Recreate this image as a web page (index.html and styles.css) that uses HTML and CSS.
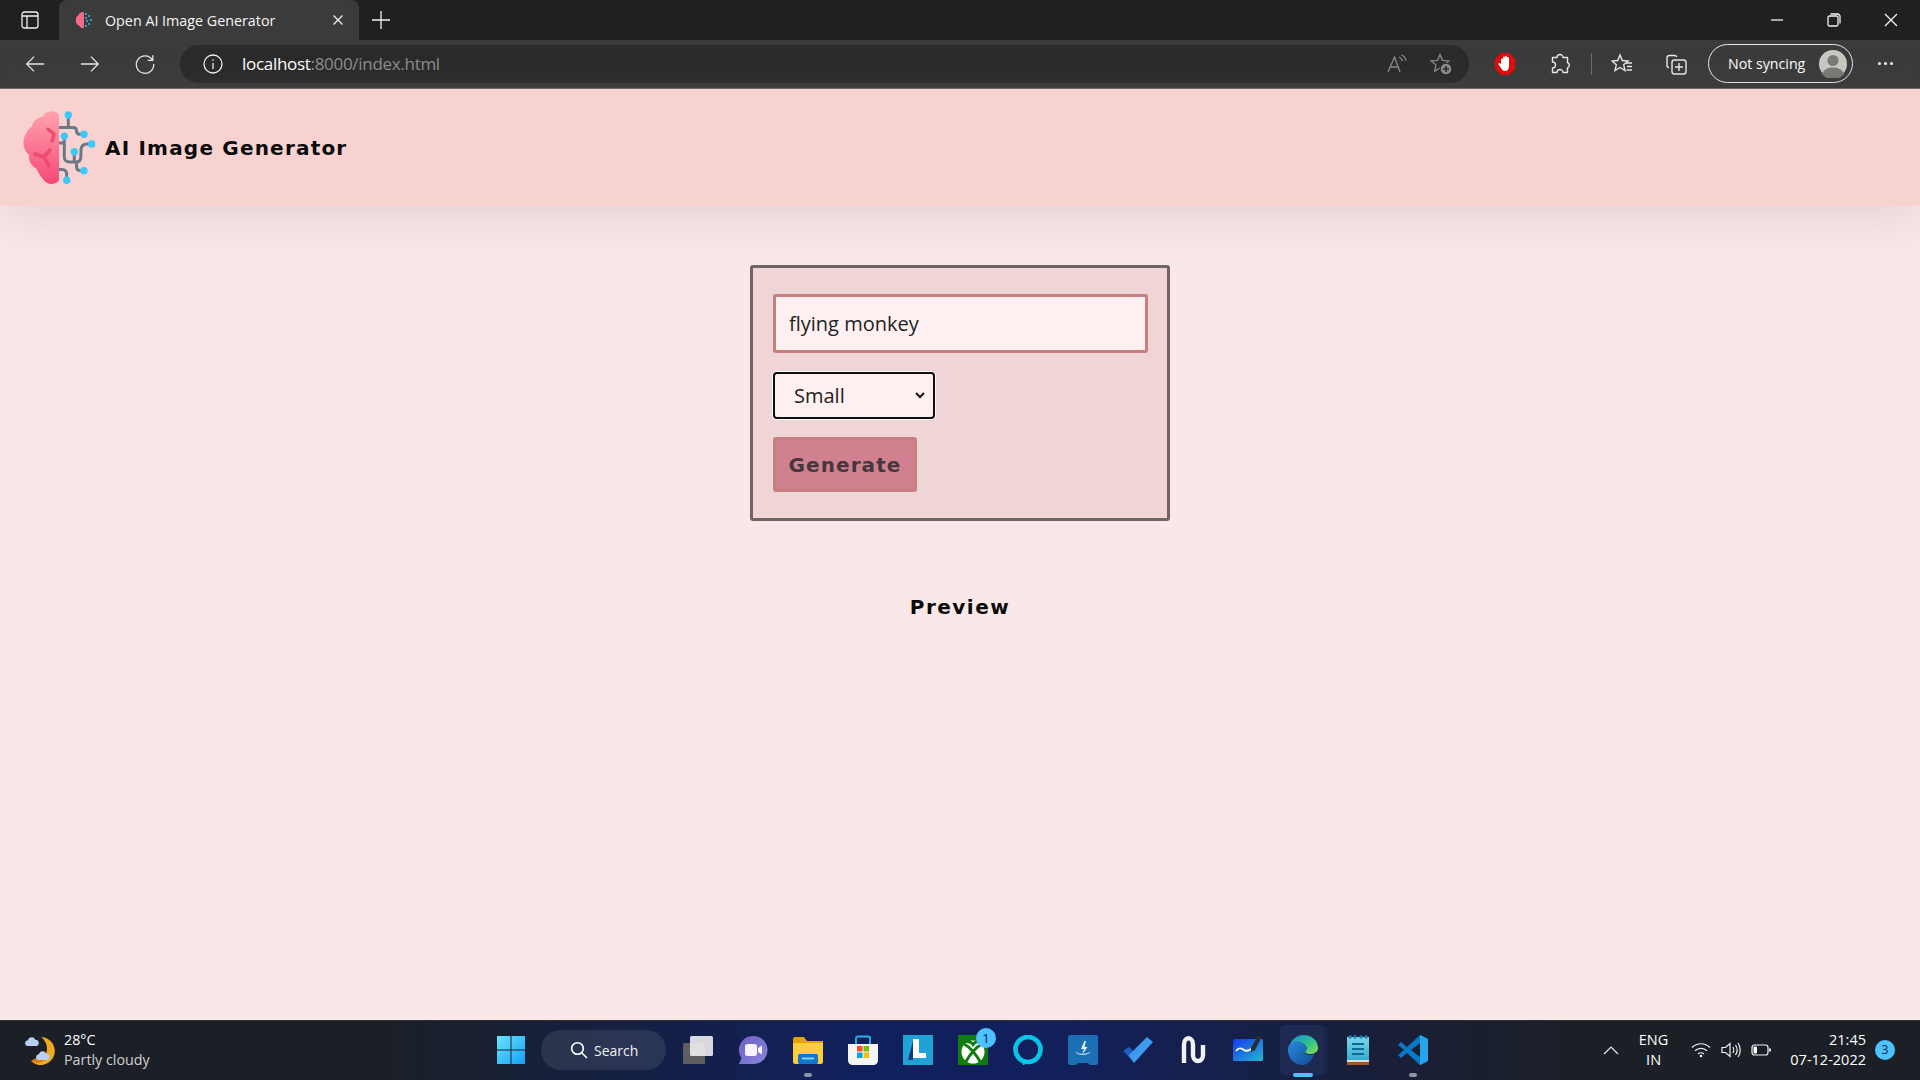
FILE: index.html
```html
<!DOCTYPE html>
<html lang="en">
<head>
    <meta charset="UTF-8">
    <title>Open AI Image Generator</title>
    <link rel="stylesheet" href="styles.css">
</head>
<body>

<div class="tabstrip">
    <svg class="tab-toggle" viewBox="0 0 18 18"><rect x="1" y="1" width="16" height="16" rx="2.5"/><path d="M1 5h16M6 5v12"/></svg>
    <div class="tab">
        <svg class="favicon" viewBox="0 0 18 18">
            <path d="M9 1C6 1 4 2 3.500 4 1.500 5 .5 7 1 9.500c-.5 2.500 1 4.500 3 5 1 2 3 3 5 2.500z" fill="#f4688a"/>
            <g fill="#35bfe6"><circle cx="11" cy="3" r="1"/><circle cx="14" cy="5" r="1"/><circle cx="11" cy="7" r="1"/><circle cx="16" cy="9" r="1"/><circle cx="12" cy="10" r="1"/><circle cx="14" cy="13" r="1"/><circle cx="11" cy="15" r="1"/></g>
        </svg>
        <span class="tab-title">Open AI Image Generator</span>
        <svg class="tab-close" viewBox="0 0 12 12"><path d="M1.500 1.500l9 9M10.500 1.500l-9 9"/></svg>
    </div>
    <svg class="new-tab" viewBox="0 0 18 18"><path d="M9 0v18M0 9h18"/></svg>
    <div class="window-controls">
        <svg viewBox="0 0 14 14"><path d="M1 7h12"/></svg>
        <svg viewBox="0 0 14 14"><rect x="1" y="3" width="10" height="10" rx="1.500"/><path d="M3.500 1h7a2.500 2.500 0 0 1 2.500 2.500v7"/></svg>
        <svg viewBox="0 0 14 14"><path d="M1 1l12 12M13 1L1 13"/></svg>
    </div>
</div>

<div class="toolbar">
    <svg class="tool-icon nav-back" viewBox="0 0 24 24"><path d="M22 12H3M11 4l-8 8 8 8"/></svg>
    <svg class="tool-icon nav-forward" viewBox="0 0 24 24"><path d="M2 12h19M13 4l8 8-8 8"/></svg>
    <svg class="tool-icon nav-reload" viewBox="0 0 24 24"><path d="M20 7.500A9.500 9.500 0 1 0 21.500 12M20.500 2.500V8h-5.500"/></svg>
    <div class="omnibox">
        <svg class="info-icon" viewBox="0 0 20 20"><circle cx="10" cy="10" r="9"/><path d="M10 9v6M10 5.200v1.600"/></svg>
        <span class="url"><span class="url-host">localhost</span>:8000/index.html</span>
        <svg class="dim-icon read-aloud" viewBox="0 0 20 20"><path d="M1 18L7.500 3 13 18M3.500 13h7.500M12 3c2 .8 3 2 3.500 4M14.500 1c2.500 1 4 3 4.500 5.500"/></svg>
        <svg class="dim-icon fav-add" viewBox="0 0 22 22">
            <path d="M10 1.500l2.500 5.800 6.300.6-4.800 4.200 1.400 6.200L10 15l-5.400 3.300L6 12.100 1.200 7.900l6.300-.6z"/>
            <circle class="fav-add-dot" cx="16" cy="16" r="5.800"/>
            <path class="fav-add-plus" d="M16 13v6M13 16h6"/>
        </svg>
    </div>
    <svg class="adblock" viewBox="0 0 20 22">
        <path d="M6 0h8l6 6v10l-6 6H6l-6-6V6z" fill="#e30b0b"/>
        <path d="M6 11V6.500a1 1 0 0 1 2 0V4.500a1 1 0 0 1 2 0v-.5a1 1 0 0 1 2 0v1a1 1 0 0 1 2 0v8c0 3-1.500 5-4 5-2 0-3-1-4-3l-2.500-3.500c-.5-1 .8-2 1.700-1z" fill="#fff"/>
    </svg>
    <svg class="tool-icon extensions" viewBox="0 0 22 22"><path d="M8 4.500a3 3 0 0 1 6 0h4.500v5a3 3 0 0 1 0 5.500v4.500H14a3 3 0 0 0-6 0H3.500V15a3 3 0 0 0 0-6V4.500z" stroke-linejoin="round"/></svg>
    <span class="toolbar-divider"></span>
    <svg class="tool-icon favorites" viewBox="0 0 22 22"><path d="M9 2l2.300 5.500 5.700.5-4.300 3.800 1.300 5.700-5-3-5 3 1.300-5.700L1 8l5.700-.5zM15 10h6M16 13.500h5M15.500 17h5.500"/></svg>
    <svg class="tool-icon collections" viewBox="0 0 22 22"><path d="M4 14.500c-1 0-2-.7-2-2V5c0-1.500 1-2.500 2.500-2.500h5c1.200 0 2 .7 2.300 1.500"/><rect x="7" y="7" width="14" height="14" rx="2.500"/><path d="M14 10v8M10 14h8"/></svg>
    <div class="sync-pill">
        <span class="sync-label">Not syncing</span>
        <svg class="avatar" viewBox="0 0 28 28">
            <circle cx="14" cy="14" r="14" fill="#c9c8c3"/>
            <circle cx="14" cy="10.500" r="5.500" fill="#7b7a76"/>
            <path d="M3 24c2-5 6-6.500 11-6.500S23 19 25 24a14 14 0 0 1-22 0z" fill="#7b7a76"/>
        </svg>
    </div>
    <span class="more-dots"><i></i><i></i><i></i></span>
</div>

<header class="site-header">
    <svg class="logo" viewBox="0 0 80 80">
        <defs>
            <linearGradient id="brainFill" x1="0" y1="0" x2="0" y2="1">
                <stop offset="0" stop-color="#ffa3ad"/>
                <stop offset="1" stop-color="#f5487a"/>
            </linearGradient>
        </defs>
        <path d="M39 7C37 4 33 2.500 29 3.500c-3 .5-5 2.500-6 5C17 9.500 13 13 12 18.500 7 22 3 29 3.500 36c.5 5 2.500 8.500 5.500 11-.5 6 2 11 7.500 13.500C19 67 23 72 27 75c5 2 9 .5 12-2.500z" fill="url(#brainFill)"/>
        <path d="M28 21l6 5-2 7" fill="none" stroke="#ec4d70" stroke-width="3.500" stroke-linecap="round" stroke-linejoin="round"/>
        <path d="M15 46l9 3 6-7M24 49l5 9" fill="none" stroke="#ec4d70" stroke-width="3.500" stroke-linecap="round" stroke-linejoin="round"/>
        <g fill="none" stroke="#6b7985" stroke-width="3">
            <path d="M39 19.500h14c2.500 0 3.500 1.500 3.500 3.500s1.500 3.300 3.500 3.300h4"/>
            <path d="M48.300 7v12.500"/>
            <path d="M39 35h5.300"/>
            <path d="M44.300 28.300V49c0 3 2 5 5 5h7c2.500 0 4-1.500 4.500-4l.2-8c.3-4 2.500-6 6-6h4.700"/>
            <path d="M54.300 43.700V54"/>
            <path d="M56.500 54v4.500c0 2.700 1.500 4.200 4 4.200H64"/>
            <path d="M39 61.500h3c3 0 4.700 2 4.700 5v5.800"/>
        </g>
        <g fill="#3dc8f5">
            <circle cx="48.300" cy="7" r="3.700"/>
            <circle cx="64" cy="26.300" r="3.700"/>
            <circle cx="44.300" cy="28.300" r="3.700"/>
            <circle cx="71.700" cy="36" r="3.700"/>
            <circle cx="54.300" cy="43.700" r="3.700"/>
            <circle cx="64" cy="62.700" r="3.700"/>
            <circle cx="46.700" cy="72.300" r="3.700"/>
        </g>
    </svg>
    <h1 class="site-title">AI Image Generator</h1>
</header>

<main class="content">
    <form class="prompt-form">
        <input class="prompt-input" type="text" value="flying monkey">
        <select class="size-select">
            <option>Small</option>
            <option>Medium</option>
            <option>Large</option>
        </select>
        <button class="generate-btn" type="button">Generate</button>
    </form>
    <h2 class="preview-title">Preview</h2>
</main>

<footer class="taskbar">
    <div class="weather">
        <svg class="weather-icon" viewBox="0 0 32 32">
            <path d="M18 3A14 14 0 1 1 8 27c8 1 15-3 16-11 .5-5-2-10-6-13z" fill="#eeaa1f"/>
            <path d="M8 27c5 3 12 2 16-3l-6-3z" fill="#d97a14"/>
            <path d="M4 12a3 3 0 0 1 .8-5.800 4 4 0 0 1 7.500-.5 3.200 3.200 0 0 1 1 6.300z" fill="#b9d0f2"/>
            <path d="M15 26a3 3 0 0 1 .8-5.800 4 4 0 0 1 7.500-.5 3.200 3.200 0 0 1 1 6.300z" fill="#b9d0f2"/>
        </svg>
        <div class="weather-text">
            <span class="weather-temp">28°C</span>
            <span class="weather-desc">Partly cloudy</span>
        </div>
    </div>

    <div class="task-icons">
        <div class="task-item start">
            <svg viewBox="0 0 30 30">
                <defs><linearGradient id="winFill" x1="0" y1="0" x2="1" y2="1"><stop offset="0" stop-color="#6fe3ff"/><stop offset="1" stop-color="#12a0f5"/></linearGradient></defs>
                <path d="M1 1h13.500v13.500H1zM15.500 1H29v13.500H15.500zM1 15.500h13.500V29H1zM15.500 15.500H29V29H15.500z" fill="url(#winFill)"/>
            </svg>
        </div>
        <div class="search-pill">
            <svg viewBox="0 0 18 18"><circle cx="7.500" cy="7.500" r="5.800"/><path d="M11.700 11.700L17 17"/></svg>
            <span>Search</span>
        </div>
        <div class="task-item">
            <svg viewBox="0 0 30 30">
                <rect x="0" y="8" width="22" height="21" rx="1.500" fill="#5f5f5f"/>
                <rect x="7" y="1" width="23" height="20" rx="1.500" fill="#f2f2f2" opacity=".88"/>
            </svg>
        </div>
        <div class="task-item">
            <svg viewBox="0 0 30 30">
                <defs><linearGradient id="chatFill" x1="0" y1="0" x2="1" y2="1"><stop offset="0" stop-color="#6a5fc0"/><stop offset="1" stop-color="#8a86e0"/></linearGradient></defs>
                <path d="M15.500 1a14 14 0 0 1 0 28H1l2.500-6A14 14 0 0 1 15.500 1z" fill="url(#chatFill)"/>
                <rect x="7" y="9" width="12" height="12" rx="2.500" fill="#f6f4ff"/>
                <path d="M20 13l4-2.500v9L20 17z" fill="#f6f4ff"/>
            </svg>
        </div>
        <div class="task-item has-dot">
            <svg viewBox="0 0 30 30"><path d="M0 4c0-1 1-2 2-2h9l3 4h16v3H0z" fill="#e2a209"/><path d="M0 8h30v19c0 1-1 2-2 2H2c-1 0-2-1-2-2z" fill="#fdcd3f"/><rect x="5" y="19" width="20" height="10" rx="1.500" fill="#1277c9"/><rect x="9" y="22.500" width="12" height="2" fill="#7fd0f5"/></svg>
        </div>
        <div class="task-item">
            <svg viewBox="0 0 30 30"><path d="M0 9h30v16c0 3-2 5-5 5H5c-3 0-5-2-5-5z" fill="#f5f5f5"/><path d="M8 9V3c0-1 1-1.500 2-1.500h10c1 0 2 .5 2 1.500v6" fill="none" stroke="#2ab4e5" stroke-width="1.800"/><rect x="9" y="11" width="5.500" height="5.500" fill="#f25022"/><rect x="15.500" y="11" width="5.500" height="5.500" fill="#7fba00"/><rect x="9" y="17.500" width="5.500" height="5.500" fill="#00a4ef"/><rect x="15.500" y="17.500" width="5.500" height="5.500" fill="#ffb900"/></svg>
        </div>
        <div class="task-item">
            <svg viewBox="0 0 30 30"><rect width="30" height="30" fill="#1fa3d6"/><path d="M5 25L10 6v19z" fill="#123a7a"/><path d="M10 4h6v14h7v5H10z" fill="#fff"/></svg>
        </div>
        <div class="task-item has-badge">
            <svg viewBox="0 0 30 30">
                <rect width="30" height="30" rx="1" fill="#107c10"/>
                <circle cx="15" cy="17" r="11.500" fill="#fff"/>
                <path d="M6 9c6 3 13 12 17 19M24 9c-6 3-13 12-17 19M8 6.500c4 0 6 1.500 7 3 1-1.500 3-3 7-3" fill="none" stroke="#107c10" stroke-width="3"/>
            </svg>
            <span class="task-badge">1</span>
        </div>
        <div class="task-item">
            <svg viewBox="0 0 30 30">
                <circle cx="15" cy="14.500" r="12.500" fill="none" stroke="#0ac4e8" stroke-width="4.600"/>
                <path d="M8.500 24l1.500 6.500 6-3.500z" fill="#0ac4e8"/>
            </svg>
        </div>
        <div class="task-item">
            <svg viewBox="0 0 30 30">
                <path d="M2 0h26c1 0 2 1 2 2v26c0 1-1 2-2 2h-6l-2-2H10l-2 2H2c-1 0-2-1-2-2V2C0 1 1 0 2 0z" fill="#1a6fb5"/>
                <path d="M16.500 6l-3.500 8h3l-2 6 5.500-8h-3l1.500-6z" fill="#e6f2fb"/>
                <path d="M8 16c-1 2 3 4 7 4s8-2 7-4c0 1.500-3 2.700-7 2.700S8 17.500 8 16z" fill="#b5d8f0"/>
            </svg>
        </div>
        <div class="task-item">
            <svg viewBox="0 0 30 30"><path d="M10 26L0 16l6-4 6 6z" fill="#1b5fc1"/><path d="M5.500 20.500L11 28 30 7l-6-5z" fill="#3d9bef"/></svg>
        </div>
        <div class="task-item">
            <svg viewBox="0 0 30 30"><path d="M6 28V10c0-9 9-9 9 0v10c0 8 10 8 10 0V10" fill="none" stroke="#f2f2f2" stroke-width="4.400"/></svg>
        </div>
        <div class="task-item">
            <svg viewBox="0 0 30 30">
                <defs><linearGradient id="boardFill" x1="0" y1="0" x2="1" y2="1"><stop offset="0" stop-color="#1438f0"/><stop offset="1" stop-color="#25b8d0"/></linearGradient></defs>
                <rect y="4" width="30" height="22" rx="1.500" fill="url(#boardFill)"/>
                <path d="M3 16c3-4 5-3 7-1.500s4 2.500 8-.5" fill="none" stroke="#fff" stroke-width="1.800"/>
                <path d="M18 13L25 0l3.500 2L22 15l-4 2z" fill="#2a2d34"/>
            </svg>
        </div>
        <div class="task-item is-active">
            <svg viewBox="0 0 30 30">
                <defs>
                    <linearGradient id="edgeFill" x1="0" y1="0" x2="1" y2="1"><stop offset="0" stop-color="#1c8fd8"/><stop offset=".55" stop-color="#2fc28c"/><stop offset="1" stop-color="#8ae050"/></linearGradient>
                    <linearGradient id="edgeBlue" x1="0" y1="0" x2="1" y2="1"><stop offset="0" stop-color="#2a8be0"/><stop offset="1" stop-color="#124a90"/></linearGradient>
                </defs>
                <path d="M0 15C0 7 8 4 14 8c5 3 6 7 3 9-1 1 0 3 5 3 2 0 4-.5 4.500-1.500C24 25 20 30 15 30 6 30 0 23 0 15z" fill="url(#edgeBlue)"/>
                <path d="M2 9C5 3 10 0 16 0c8 0 14 6 14 13 0 4-4 6-8 6-4 0-5-1-4.500-2.500C20 14 19 11 15 8.500 10 5.500 5 6 2 9z" fill="url(#edgeFill)"/>
            </svg>
        </div>
        <div class="task-item">
            <svg viewBox="0 0 30 30">
                <defs><linearGradient id="padFill" x1="0" y1="0" x2="0" y2="1"><stop offset="0" stop-color="#7fd6ea"/><stop offset="1" stop-color="#2fa8cc"/></linearGradient></defs>
                <rect x="4" y="2" width="22" height="25" fill="url(#padFill)"/>
                <rect x="4" y="26" width="22" height="4" fill="#a5591c"/>
                <path d="M4 26h22" stroke="#fff" stroke-width="1.500"/>
                <path d="M9 9h12M9 14h12M9 19h12" stroke="#106a94" stroke-width="2"/>
                <g fill="#1585aa"><circle cx="7" cy="2" r="1.800"/><circle cx="12" cy="2" r="1.800"/><circle cx="18" cy="2" r="1.800"/><circle cx="23" cy="2" r="1.800"/></g>
            </svg>
        </div>
        <div class="task-item has-dot">
            <svg viewBox="0 0 30 30">
                <path fill-rule="evenodd" d="M22 0l8 4v22l-8 4L9 18l-6 5-3-3 6-5-6-5 3-3 6 5zM22 8l-9 7 9 7z" fill="#0a78c8"/>
                <path fill-rule="evenodd" d="M22 0l8 4v22l-8 4v-8V8z" fill="#25a5ee"/>
            </svg>
        </div>
    </div>

    <div class="tray">
        <svg class="tray-chevron" viewBox="0 0 16 9"><path d="M1 8l7-7 7 7"/></svg>
        <div class="tray-lang"><span>ENG</span><span>IN</span></div>
        <svg class="tray-icon" viewBox="0 0 20 16"><path d="M1 5.500c5-5 13-5 18 0M4 8.800c3.500-3.300 8.500-3.300 12 0M7 12c1.800-1.500 4.200-1.500 6 0"/><circle cx="10" cy="14" r="1.200" fill="#fff" stroke="none"/></svg>
        <svg class="tray-icon" viewBox="0 0 20 16"><path d="M1 5.500h3.500L9 1.500v13l-4.500-4H1zM12 5c1 1.500 1 4.500 0 6M14.500 3c2 3 2 7 0 10M17 1c3 4 3 10 0 14"/></svg>
        <svg class="tray-icon" viewBox="0 0 20 16"><rect x="1" y="3" width="16" height="10" rx="2.500"/><rect x="2.500" y="4.500" width="3.500" height="7" rx="1" fill="#fff" stroke="none"/><path d="M19 6.500v3" stroke-width="1.800"/></svg>
        <div class="tray-clock"><span>21:45</span><span>07-12-2022</span></div>
        <span class="tray-badge">3</span>
    </div>
</footer>

</body>
</html>
```

FILE: styles.css
```css
:root {
    --page-bg: #fae8e8;
    --header-bg: #f8d2d1;
    --form-bg: #f0d5d6;
    --chrome-dark: #202020;
    --chrome-mid: #3b3b3b;
    --chrome-field: #2b2b2b;
    --heading-font: "DejaVu Sans", Verdana, sans-serif;
    --ui-font: "Open Sans", "Noto Sans", sans-serif;
}

* {
    box-sizing: border-box;
}

body {
    margin: 0;
    height: 100vh;
    overflow: hidden;
    display: flex;
    flex-direction: column;
    background-color: var(--page-bg);
    font-family: var(--ui-font);
}

svg {
    display: block;
    flex-shrink: 0;
}

/* browser tab row */
.tabstrip {
    height: 40px;
    flex-shrink: 0;
    display: flex;
    align-items: center;
    padding-left: 21px;
    background-color: var(--chrome-dark);
}

.tabstrip svg {
    fill: none;
    stroke: #f2f2f2;
    stroke-width: 1.300;
}

.tab-toggle {
    width: 18px;
    height: 18px;
}

.tab {
    width: 300px;
    height: 40px;
    margin-left: 20px;
    padding: 0 15px 0 16px;
    display: flex;
    align-items: center;
    background-color: var(--chrome-mid);
    border-radius: 8px 8px 0 0;
}

.tabstrip .favicon {
    width: 18px;
    height: 18px;
    stroke: none;
}

.tab-title {
    margin-left: 12px;
    flex: 1;
    font-size: 14.300px;
    color: #f5f5f5;
}

.tab-close {
    width: 12px;
    height: 12px;
}

.new-tab {
    width: 18px;
    height: 18px;
    margin-left: 13px;
}

.window-controls {
    margin-left: auto;
    display: flex;
    gap: 43px;
    padding-right: 22px;
}

.window-controls svg {
    width: 14px;
    height: 14px;
}

/* address bar row */
.toolbar {
    height: 49px;
    flex-shrink: 0;
    padding: 5px 0 6px 24px;
    display: flex;
    align-items: center;
    background-color: var(--chrome-mid);
    border-bottom: 1px solid #6a6a6a;
}

.tool-icon {
    width: 22px;
    height: 22px;
    fill: none;
    stroke: #e8e8e8;
    stroke-width: 1.400;
}

.nav-forward,
.nav-reload {
    margin-left: 33px;
}

.omnibox {
    width: 1289px;
    height: 38px;
    margin-left: 24px;
    padding-left: 23px;
    display: flex;
    align-items: center;
    background-color: var(--chrome-field);
    border-radius: 19px;
}

.info-icon {
    width: 20px;
    height: 20px;
    fill: none;
    stroke: #f2f2f2;
    stroke-width: 1.300;
}

.url {
    margin-left: 19px;
    font-size: 17px;
    letter-spacing: -0.3px;
    color: #8d8d8d;
}

.url-host {
    color: #fff;
}

.dim-icon {
    fill: none;
    stroke: #8a8a8a;
    stroke-width: 1.300;
}

.read-aloud {
    width: 20px;
    height: 20px;
    margin-left: auto;
}

.fav-add {
    width: 22px;
    height: 22px;
    margin-left: 23px;
    margin-right: 17px;
}

.fav-add-dot {
    fill: #8a8a8a;
    stroke: var(--chrome-field);
    stroke-width: 1;
}

.fav-add-plus {
    stroke: #2b2b2b;
    stroke-width: 1.600;
}

.adblock {
    width: 20px;
    height: 22px;
    margin-left: 26px;
}

.extensions {
    margin-left: 34px;
}

.toolbar-divider {
    width: 1px;
    height: 22px;
    margin-left: 20px;
    background-color: #6e6e6e;
}

.favorites {
    margin-left: 19px;
}

.collections {
    margin-left: 32px;
}

.sync-pill {
    width: 145px;
    height: 39px;
    margin-left: 21px;
    padding: 0 5px 0 19px;
    display: flex;
    align-items: center;
    justify-content: space-between;
    border: 1.500px solid #e8e8e8;
    border-radius: 20px;
}

.sync-label {
    font-size: 14.200px;
    color: #fff;
}

.avatar {
    width: 28px;
    height: 28px;
}

.more-dots {
    margin-left: 25px;
    display: flex;
    gap: 3px;
}

.more-dots i {
    width: 3px;
    height: 3px;
    border-radius: 50%;
    background-color: #f2f2f2;
}

/* page */
.site-header {
    height: 117px;
    flex-shrink: 0;
    padding-left: 20px;
    display: flex;
    align-items: center;
    gap: 5px;
    background-color: var(--header-bg);
    box-shadow: 0 8px 50px rgba(120, 100, 100, 0.18);
    position: relative;
}

.logo {
    width: 80px;
    height: 80px;
}

.site-title {
    margin: 0;
    font-family: var(--heading-font);
    font-size: 20px;
    font-weight: 700;
    letter-spacing: 1.200px;
    color: #0b0b0b;
}

.content {
    flex: 1;
    min-height: 0;
    padding-top: 59px;
    display: flex;
    flex-direction: column;
    align-items: center;
}

.prompt-form {
    width: 420px;
    height: 256px;
    padding: 26px 20px 0;
    display: flex;
    flex-direction: column;
    align-items: flex-start;
    background-color: var(--form-bg);
    border: 3px solid #6e6464;
    border-radius: 3px;
}

.prompt-input {
    width: 375px;
    height: 59px;
    padding: 0 13px;
    font-family: var(--ui-font);
    font-size: 20px;
    color: #222;
    background-color: #fef0f0;
    border: 3px solid #c77f7f;
    border-radius: 3px;
    outline: none;
}

.size-select {
    width: 162px;
    height: 47px;
    margin-top: 19px;
    padding: 0 14px 0 20px;
    appearance: none;
    font-family: var(--ui-font);
    font-size: 20px;
    color: #222;
    background-color: #fef0f0;
    background-image: url("data:image/svg+xml,%3Csvg xmlns='http://www.w3.org/2000/svg' viewBox='0 0 10 7'%3E%3Cpath d='M1 1l4 4 4-4' fill='none' stroke='%23111' stroke-width='2'/%3E%3C/svg%3E");
    background-repeat: no-repeat;
    background-size: 10px 7px;
    background-position: right 9px center;
    border: 1px solid #c77f7f;
    border-radius: 4px;
    outline: 2px solid #101010;
    outline-offset: -2px;
    box-shadow: 0 0 0 1px #fff;
}

.generate-btn {
    width: 144px;
    height: 55px;
    margin-top: 18px;
    padding: 0;
    font-family: var(--heading-font);
    font-size: 20px;
    font-weight: 700;
    letter-spacing: 1.100px;
    color: #44383c;
    background-color: #d0808e;
    border: 3px solid #c77f7f;
    border-radius: 3px;
}

.preview-title {
    margin: 74px 0 0;
    font-family: var(--heading-font);
    font-size: 20px;
    font-weight: 700;
    letter-spacing: 1.500px;
    color: #0b0b0b;
}

/* windows taskbar */
.taskbar {
    height: 60px;
    flex-shrink: 0;
    padding-bottom: 1px;
    display: grid;
    grid-template-columns: 1fr auto 1fr;
    align-items: center;
    background: linear-gradient(90deg, #1b2027 0%, #1b2027 20%, #10205e 45%, #12205c 55%, #1a1f33 75%, #1b2027 82%);
    border-top: 1px solid #2d3138;
    color: #fff;
}

.weather {
    padding-left: 23px;
    display: flex;
    align-items: center;
    gap: 9px;
}

.weather-icon {
    width: 32px;
    height: 32px;
}

.weather-text {
    display: flex;
    flex-direction: column;
    font-size: 14.300px;
    line-height: 20px;
}

.weather-desc {
    color: #d0d0d0;
}

.task-icons {
    display: flex;
    align-items: center;
}

.task-item {
    width: 55px;
    height: 56px;
    display: flex;
    align-items: center;
    justify-content: center;
    position: relative;
}

.task-item svg {
    width: 30px;
    height: 30px;
    position: relative;
}

.start {
    width: 61px;
}

.has-dot::after,
.is-active::after {
    content: "";
    position: absolute;
    bottom: 1px;
    left: 50%;
    width: 8px;
    height: 4px;
    margin-left: -4px;
    border-radius: 2px;
    background-color: #8b95a8;
}

.is-active::before {
    content: "";
    position: absolute;
    top: 3px;
    left: 5px;
    width: 44px;
    height: 50px;
    background-color: #1f2a52;
    border-radius: 5px;
    box-shadow: 5px 0 0 -1px #1a2447;
}

.is-active::after {
    width: 20px;
    margin-left: -10px;
    background-color: #4cc2ff;
}

.task-badge {
    position: absolute;
    top: 6px;
    right: 4px;
    width: 20px;
    height: 20px;
    font-size: 13px;
    line-height: 20px;
    text-align: center;
    color: #10203a;
    background-color: #4cc2ff;
    border-radius: 50%;
}

.search-pill {
    width: 125px;
    height: 40px;
    margin: 0 4px 0 0;
    padding-left: 29px;
    display: flex;
    align-items: center;
    gap: 6px;
    font-size: 14px;
    color: #f2f2f2;
    background-color: rgba(255, 255, 255, 0.09);
    border-radius: 20px;
}

.search-pill svg {
    width: 18px;
    height: 18px;
    fill: none;
    stroke: #fff;
    stroke-width: 1.600;
}

.tray {
    padding-right: 25px;
    display: flex;
    align-items: center;
    justify-content: flex-end;
    font-size: 14.500px;
}

.tray-chevron {
    width: 16px;
    height: 9px;
    margin-right: 20px;
    fill: none;
    stroke: #e8e8e8;
    stroke-width: 1.200;
}

.tray-lang {
    display: flex;
    flex-direction: column;
    align-items: center;
    line-height: 20px;
    margin-right: 23px;
}

.tray-icon {
    width: 20px;
    height: 16px;
    margin-right: 10px;
    fill: none;
    stroke: #f2f2f2;
    stroke-width: 1.200;
}

.tray-clock {
    margin-left: 9px;
    display: flex;
    flex-direction: column;
    align-items: flex-end;
    line-height: 20px;
}

.tray-badge {
    width: 20px;
    height: 20px;
    margin-left: 9px;
    font-size: 12px;
    line-height: 20px;
    text-align: center;
    color: #10203a;
    background-color: #4cc2ff;
    border-radius: 50%;
}
```
